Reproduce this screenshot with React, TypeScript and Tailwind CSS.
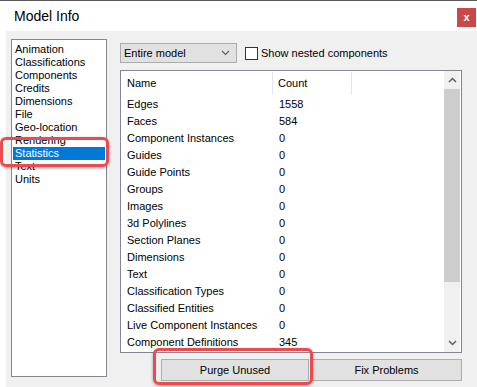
import React from "react";

const categories = [
  "Animation",
  "Classifications",
  "Components",
  "Credits",
  "Dimensions",
  "File",
  "Geo-location",
  "Rendering",
  "Statistics",
  "Text",
  "Units",
];

const rows: [string, string][] = [
  ["Edges", "1558"],
  ["Faces", "584"],
  ["Component Instances", "0"],
  ["Guides", "0"],
  ["Guide Points", "0"],
  ["Groups", "0"],
  ["Images", "0"],
  ["3d Polylines", "0"],
  ["Section Planes", "0"],
  ["Dimensions", "0"],
  ["Text", "0"],
  ["Classification Types", "0"],
  ["Classified Entities", "0"],
  ["Live Component Instances", "0"],
  ["Component Definitions", "345"],
];

export default function App() {
  return (
    <div
      className="relative w-[477px] h-[387px] bg-white flex flex-col overflow-hidden text-black"
      style={{ fontFamily: '"Liberation Sans", Arial, sans-serif' }}
    >
      {/* title bar */}
      <div className="h-[31px] shrink-0 border-t border-[#5a5a5a] flex items-center justify-between">
        <span className="ml-[14px] text-[14px] leading-none">Model Info</span>
        <div className="mr-[1px] w-[19px] h-[19px] bg-[#c9494b] flex items-center justify-center text-white text-[11px] font-bold leading-none mb-[-2px]">
          x
        </div>
      </div>

      {/* body */}
      <div className="flex-1 ml-[6px] bg-[#f0f0f0] flex pt-[8px] pl-[5px]">
        {/* category list */}
        <div className="w-[96px] h-[338px] border border-[#828790] bg-white pt-[3px] px-[1px] text-[11px]">
          {categories.map((c) => (
            <div
              key={c}
              className={
                "h-[13px] leading-[13px] pl-[2px] whitespace-nowrap " +
                (c === "Statistics" ? "bg-[#0078d7] text-white" : "")
              }
            >
              {c}
            </div>
          ))}
        </div>

        {/* right column */}
        <div className="ml-[13px] w-[342px] flex flex-col">
          <div className="mt-[4px] h-[20px] flex items-center">
            <div className="w-[117px] h-[20px] border border-[#adadad] bg-[#e1e1e1] flex items-center justify-between pl-[3px] pr-[6px] text-[11px]">
              <span>Entire model</span>
              <svg width="9" height="6" viewBox="0 0 9 6">
                <path d="M1 1 L4.5 4.5 L8 1" stroke="#5c5c5c" strokeWidth="1.1" fill="none" />
              </svg>
            </div>
            <div className="ml-[8px] w-[13px] h-[13px] border border-[#333] bg-white" />
            <span className="ml-[3px] text-[11px]">Show nested components</span>
          </div>

          {/* table */}
          <div className="mt-[7px] h-[283px] border border-[#828790] bg-white flex text-[11px]">
            <div className="flex-1 flex flex-col">
              <div className="h-[25px] flex items-stretch">
                <div className="w-[152px] pl-[6px] flex items-center border-r border-[#e5e5e5] my-[1px]">
                  Name
                </div>
                <div className="w-[79px] pl-[5px] flex items-center border-r border-[#e5e5e5] my-[1px]">
                  Count
                </div>
              </div>
              {rows.map(([n, v]) => (
                <div key={n} className="h-[17px] flex items-center whitespace-nowrap">
                  <div className="w-[152px] pl-[6px]">{n}</div>
                  <div className="pl-[6px]">{v}</div>
                </div>
              ))}
            </div>
            {/* scrollbar */}
            <div className="w-[16px] mr-[1px] bg-[#f0f0f0] flex flex-col">
              <div className="h-[18px] flex items-center justify-center">
                <svg width="9" height="6" viewBox="0 0 9 6">
                  <path d="M1 5 L4.5 1.5 L8 5" stroke="#606060" strokeWidth="1.5" fill="none" />
                </svg>
              </div>
              <div className="h-[193px] bg-[#cdcdcd]" />
              <div className="flex-1" />
              <div className="h-[18px] flex items-center justify-center">
                <svg width="9" height="6" viewBox="0 0 9 6">
                  <path d="M1 1 L4.5 4.5 L8 1" stroke="#606060" strokeWidth="1.5" fill="none" />
                </svg>
              </div>
            </div>
          </div>

          {/* buttons */}
          <div className="mt-[6px] flex justify-end gap-[2px] text-[11px]">
            <div className="w-[148px] h-[22px] border border-[#adadad] bg-[#e1e1e1] flex items-center justify-center">
              Purge Unused
            </div>
            <div className="w-[151px] h-[22px] border border-[#adadad] bg-[#e1e1e1] flex items-center justify-center">
              Fix Problems
            </div>
          </div>
        </div>
      </div>

      {/* red highlights */}
      <div className="absolute left-[0px] top-[137px] w-[109px] h-[30px] rounded-[6px] border-[3px] border-[#ec4a4e] shadow-[0_1px_3px_rgba(0,0,0,0.35)]" />
      <div className="absolute left-[153px] top-[348px] w-[160px] h-[37px] rounded-[6px] border-[3px] border-[#ec4a4e] shadow-[0_1px_3px_rgba(0,0,0,0.35)]" />
    </div>
  );
}
